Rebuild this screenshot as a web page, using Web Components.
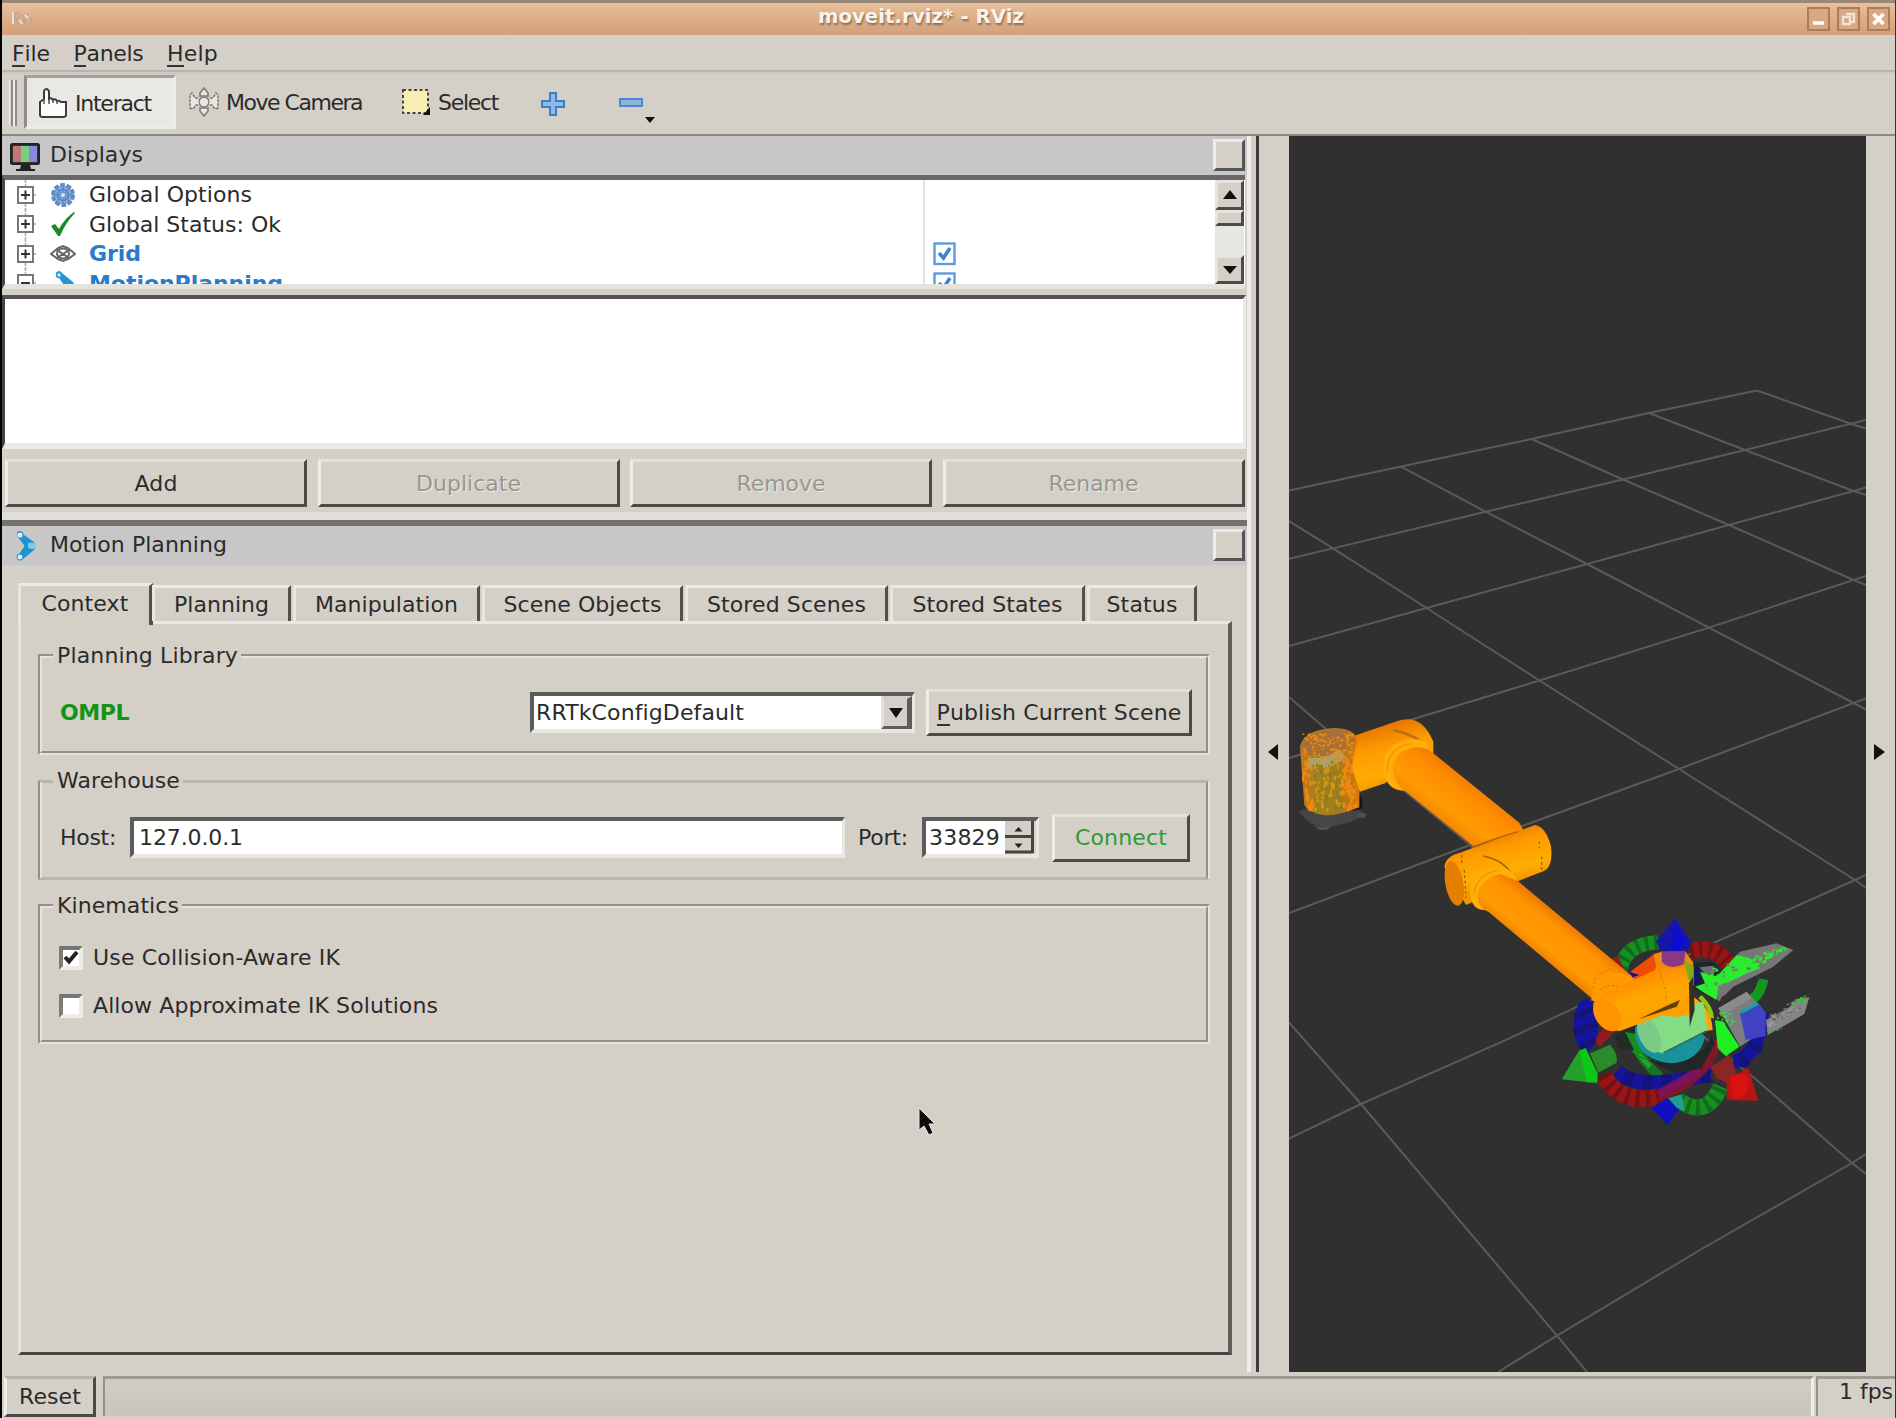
<!DOCTYPE html>
<html lang="en">
<head>
<meta charset="utf-8">
<title>moveit.rviz* - RViz</title>
<style>
html,body{margin:0;padding:0}
body{width:1896px;height:1418px;overflow:hidden;background:#d4d0c8;color:#2b2b2b;font:22px/26px "DejaVu Sans",sans-serif}
</style>
</head>
<body>
<rviz-window></rviz-window>
<script>
const pendingFit = [];
function define(name, markup, setup) {
  const tpl = document.createElement('template');
  tpl.innerHTML = markup;
  customElements.define(name, class extends HTMLElement {
    constructor() {
      super();
      this.attachShadow({ mode: 'open' }).appendChild(tpl.content.cloneNode(true));
    }
    connectedCallback() { if (setup) setup(this, this.shadowRoot); }
  });
}

/* A label whose tracking is adjusted to a given pixel width. */
define('ui-text', `<style>
:host{display:inline-block;white-space:pre;line-height:26px;flex:none}
:host([bold]){font-weight:bold}
::slotted(u){text-decoration:none;border-bottom:2px solid #333;display:inline-block;line-height:23px}
</style><slot></slot>`, el => { if (!el.fitted) { el.fitted = true; pendingFit.push(el); } });

define('push-button', `<style>
:host{display:flex;align-items:center;justify-content:center;box-sizing:border-box;height:48px;border:3px solid;border-color:#e3e1da #4a4a48 #4a4a48 #eeede8;background:#d4d0c8;flex:none}
:host([disabled]){color:#98968f;text-shadow:1px 1px 0 #eeece6}
:host([kind=float]){width:32px;height:32px;border-color:#eceae6 #555 #555 #eeede8;margin-top:-2px}
</style><slot></slot>`);

define('title-bar', `<style>
:host{display:flex;align-items:center;height:35px;box-sizing:border-box;border-top:3px solid #998877;background:linear-gradient(#e9bf9c,#dcae88 50%,#d3a079);color:#faf3ec;flex:none;padding-right:5px}
.logo{width:26px;margin-left:7px;margin-top:-3px}
.t{flex:1;display:flex;justify-content:center;margin-top:-4px;font-size:19.5px;text-shadow:1px 2px 2px #8a6a50}
.b{display:flex;gap:7px}
svg{display:block}
</style>
<svg class="logo" width="26" height="18" viewBox="0 0 26 18"><g fill="none" stroke="#c2a692" stroke-width="2"><path d="M5 16V4h4q3 2 0 5H6l5 6"/><path d="M13 5l3 9 3-9M22 8v7"/></g><path d="M4 3v12M10 11l3 4M16 6l3 3" stroke="#f2ded0" stroke-width="2"/></svg>
<div class="t"><ui-text bold w="206">moveit.rviz* - RViz</ui-text></div>
<div class="b">
<svg width="23" height="24"><rect x="1" y="1" width="21" height="22" fill="#d9a881" stroke="#ab7c59" stroke-width="2"/><path d="M6 16h11" stroke="#fff" stroke-width="3.5"/></svg>
<svg width="23" height="24"><rect x="1" y="1" width="21" height="22" fill="#d9a881" stroke="#ab7c59" stroke-width="2"/><path d="M9 7h8v8h-3M6 10h7v7H6z" fill="none" stroke="#f3e2d4" stroke-width="2.4"/></svg>
<svg width="23" height="24"><rect x="1" y="1" width="21" height="22" fill="#d9a881" stroke="#ab7c59" stroke-width="2"/><path d="M6.500 7l10 10M16.500 7l-10 10" stroke="#fff" stroke-width="3.8"/></svg>
</div>`);

define('menu-bar', `<style>
:host{display:flex;height:37px;box-sizing:border-box;padding:6px 0 0 10px;border-bottom:2px solid #b6b4ad;box-shadow:0 2px 0 #cbc9c5;flex:none;position:relative}
ui-text+ui-text{margin-left:23.500px}
</style><ui-text w="38"><u>F</u>ile</ui-text><ui-text w="70"><u>P</u>anels</ui-text><ui-text w="51"><u>H</u>elp</ui-text>`);

define('tool-bar', `<style>
:host{display:flex;height:62px;box-sizing:border-box;padding-top:3px;flex:none}
.grip{width:7px;height:46px;margin:5px 5px 0 7px;flex:none;border-left:1px solid #f0efea;background:linear-gradient(90deg,#d4d0c8 1px,#8c8b86 1px 3px,#eee 3px 5px,#8c8b86 5px)}
.on{width:152px;height:54px;box-sizing:border-box;border:3px solid;border-color:#a3a19b #eeece7 #eeece7 #8f8d88;background:#e9e8e4;display:flex;align-items:center;padding:2px 0 0 11px;margin-left:2px}
.it{display:flex;align-items:center;height:54px}
svg{display:block;flex:none}
</style>
<div class="grip"></div>
<div class="on"><svg width="30" height="32" viewBox="0 0 30 32"><path d="M2 28V15l4-3V4q2-4 5 0v8q2-2 4 1 2-2 4 1 2-1 4 1h5v13q0 2-3 2H5q-3 0-3-2z" fill="#fcfcfa" stroke="#3c3c3c" stroke-width="2"/><path d="M6 12v5M11 12v5M15 13v3M19 14v3" stroke="#555" stroke-width="1.500"/></svg><ui-text w="76" style="margin:2px 0 0 7px">Interact</ui-text></div>
<div class="it" style="margin-left:13px"><svg width="30" height="30" viewBox="0 0 30 30" fill="#e9e7e2" stroke="#7e7c78" stroke-width="1.600"><circle cx="15" cy="15" r="5"/><path d="M11 9V6l4-5 4 5v3zM11 21v3l4 5 4-5v-3z"/><path d="M9 11H6L3 6 1 8v13l3 1 3-4h3M21 11h3l3-5 2 2v13l-3 1-3-4h-3" stroke-dasharray="3 1"/></svg><ui-text w="136" style="margin:1px 0 0 7px">Move Camera</ui-text></div>
<div class="it" style="margin-left:39px"><svg width="30" height="28" viewBox="0 0 30 28"><rect x="2" y="2" width="25" height="23" fill="#f8eeb4" stroke="#444" stroke-width="2" stroke-dasharray="3 2.500"/><path d="M29 19v8h-7z" fill="#111"/></svg><ui-text w="60" style="margin:1px 0 0 7px">Select</ui-text></div>
<div class="it" style="margin:2px 0 0 43px"><svg width="24" height="26" viewBox="0 0 24 26"><path d="M9 2h6v8h8v6h-8v8H9v-8H1v-6h8z" fill="#8fb9e8" stroke="#3f7fc6" stroke-width="2"/></svg></div>
<div class="it" style="margin:2px 0 0 54px"><svg width="38" height="40" viewBox="0 0 38 40"><rect x="1" y="15" width="22" height="7" fill="#8fb5df" stroke="#4c89cc" stroke-width="2"/><path d="M26 33h10l-5 6z" fill="#111"/></svg></div>`);

define('dock-header', `<style>
:host{display:flex;align-items:center;height:39px;background:#c7c7c7;flex:none;box-sizing:border-box;padding:0 2px 0 6px}
.f{flex:1}
slot{display:block}
</style><slot></slot><div class="f"></div><push-button kind="float"></push-button>`);

define('tree-row', `<style>
:host{display:flex;height:29.5px;align-items:center;flex:none}
.x,.i,svg{display:block;flex:none}
.n{width:851px;padding:1px 0 0 13px;box-sizing:border-box}
</style>
<svg class="x" width="32" height="30" viewBox="0 0 32 30"><path d="M20.500 0v30M28 15h4" stroke="#aaa" stroke-width="1.500" stroke-dasharray="3 1"/><rect x="13" y="7" width="15" height="16" fill="#fff" stroke="#777" stroke-width="2"/><path d="M16 15h9" stroke="#333" stroke-width="2"/><path class="v" d="M20.500 10.500v9" stroke="#333" stroke-width="2"/></svg>
<slot name="icon"></slot><div class="n"><slot></slot></div><slot name="value"></slot>`, (el, r) => {
  if (el.hasAttribute('open')) r.querySelector('.v').remove();
});

define('blue-check', `<style>:host{display:block;margin-left:6px;margin-top:1px}svg{display:block}</style>
<svg width="24" height="24" viewBox="0 0 24 24"><rect x="1.500" y="1.500" width="20" height="20.500" fill="#fff" stroke="#5c9cdb" stroke-width="2.400"/><path d="M6 11l4.500 5L17 6" fill="none" stroke="#3d86cf" stroke-width="3.600"/></svg>`);

define('display-tree', `<style>
:host{display:flex;height:114px;box-sizing:border-box;border-top:5px solid #686866;border-left:3px solid #4a4a4a;border-bottom:5px solid #e5e4dc;background:#fff;width:1243px;flex:none;overflow:hidden}
.rows{flex:1;overflow:hidden;background:linear-gradient(90deg,#fff 918px,#e2e2e2 918px 920px,#fff 920px)}
.rows svg{display:block;margin-left:13px}
.blue{color:#2b7bcd}
.bar{width:29px;background:#e8e6e2;display:flex;flex-direction:column;flex:none;margin-right:1px}
.sb{box-sizing:border-box;background:#d4d0c8;border:3px solid;border-color:#e6e4de #4a4a48 #4a4a48 #e6e4de;display:flex;align-items:center;justify-content:center}
.bar svg{display:block;margin:0}
</style>
<div class="rows">
<tree-row><svg slot="icon" width="26" height="26" viewBox="-13 -13 26 26"><circle r="10" fill="#8fb0db" stroke="#5d8cc9" stroke-width="4" stroke-dasharray="4.500 1.800"/><path d="M-8-8L8 8M8-8L-8 8M0-11V11M-11 0H11" stroke="#5f8dc8" stroke-width="1.500"/><circle r="5.500" fill="none" stroke="#5a88c6" stroke-width="2"/><circle r="2" fill="#d9e6f5"/></svg><ui-text w="163">Global Options</ui-text></tree-row>
<tree-row><svg slot="icon" width="26" height="26" viewBox="0 0 26 26"><path d="M1 15l4-2 4 5Q15 7 24 1l1 1Q16 11 10 25H8z" fill="#1f8a25"/></svg><ui-text w="192">Global Status: Ok</ui-text></tree-row>
<tree-row><svg slot="icon" width="26" height="26" viewBox="0 0 26 26"><g fill="none" stroke="#666" stroke-width="2"><path d="M1 13l7-6 5-2 5 2 7 6-7 5-5 2-5-2zM7 9l12 8M19 9L7 17"/><ellipse cx="13" cy="12.500" rx="6" ry="5"/></g></svg><ui-text bold class="blue" w="52">Grid</ui-text><blue-check slot="value"></blue-check></tree-row>
<tree-row open><svg slot="icon" width="26" height="26" viewBox="0 0 26 26"><path d="M6 3q3-4 6 0l11 9q3 4 1 9l-7-1z" fill="#2796d0"/><circle cx="9" cy="5" r="2.500" fill="#c9eaf8" stroke="#2796d0" stroke-width="1.500"/></svg><ui-text bold class="blue" w="194">MotionPlanning</ui-text><blue-check slot="value"></blue-check></tree-row>
</div>
<div class="bar">
<div class="sb" style="height:30px"><svg width="16" height="10"><path d="M1 9L8 0l7 9z" fill="#111"/></svg></div>
<div class="sb" style="height:16px"></div>
<div style="flex:1"></div>
<div class="sb" style="height:29px"><svg width="16" height="10"><path d="M1 1l7 8 7-8z" fill="#111"/></svg></div>
</div>`);

define('tab-item', `<style>
:host{display:flex;align-items:center;justify-content:center;box-sizing:border-box;height:36px;border:3px solid;border-color:#ebeae5 #4f4f4c transparent #e8e6e1;border-bottom:0;margin-right:2px;flex:none;padding-top:1px;position:relative;left:-1px}
:host([selected]){height:42px;margin-right:0;margin-bottom:-4px;background:#d4d0c8;left:0;border-right-width:4px;padding-top:0}
:host([selected]) slot{display:block;margin-top:-3px}
</style><slot></slot>`);

define('group-box', `<style>
:host{display:block;flex:none}
fieldset{margin:0;padding:0;border:4px groove #e6e3dc;box-sizing:border-box;width:1172px;height:100%;min-width:0}
:host([flat]) fieldset{border-top:3px solid #b8b6b1;border-bottom:3px solid #b8b6b1}
legend{padding:0 3px 0 4px;margin-left:11px;line-height:26px;height:26px}
div{display:flex;flex-direction:column}
</style><fieldset><legend><slot name="title"></slot></legend><div><slot></slot></div></fieldset>`);

define('sunken-field', `<style>
:host{display:flex;box-sizing:border-box;height:41px;border:4px solid;border-color:#5c5c5a #e9e7e1 #e9e7e1 #5c5c5a;border-right-width:3px;background:#fff;align-items:center;flex:none;justify-content:space-between}
</style><slot></slot>`);

define('check-box', `<style>
:host{display:flex;align-items:center;gap:10px;height:26px;flex:none}
i{box-sizing:border-box;width:24px;height:24px;border:4px solid;border-color:#777573 #eeece7 #eeece7 #7d7b77;background:#fff;display:block}
svg{display:none}
:host([checked]) svg{display:block}
</style><i><svg width="16" height="16" viewBox="0 0 16 16"><path d="M2 7l4 4.500L14 2" fill="none" stroke="#222" stroke-width="4"/></svg></i><slot></slot>`);

define('context-panel', `<style>
:host{display:flex;flex-direction:column;margin-left:16px;width:1214px;flex:none}
.tabs{display:flex;align-items:flex-end;height:38px}
.pane{box-sizing:border-box;height:734px;border:3px solid;border-color:#e8e7e2 #5e5e5b #434743 #e4e2dc;border-right-width:4px;padding:19px 0 0 17px;display:flex;flex-direction:column}
.row{display:flex;align-items:center;height:82px;padding:5px 14px 0 18px;box-sizing:border-box}
.drop{box-sizing:border-box;width:31px;height:33px;background:#d4d0c8;border:3px solid;border-color:#d4d0c8 #5c5c5a #5c5c5a #e4e1da;border-right-width:5px;display:flex;align-items:center;justify-content:center}
.spin{width:31px;height:33px;flex:none}
</style>
<div class="tabs">
<tab-item selected style="width:135px"><ui-text w="87">Context</ui-text></tab-item>
<tab-item style="width:139px"><ui-text w="95">Planning</ui-text></tab-item>
<tab-item style="width:187px"><ui-text w="143">Manipulation</ui-text></tab-item>
<tab-item style="width:201px"><ui-text w="158">Scene Objects</ui-text></tab-item>
<tab-item style="width:203px"><ui-text w="159">Stored Scenes</ui-text></tab-item>
<tab-item style="width:195px"><ui-text w="150">Stored States</ui-text></tab-item>
<tab-item style="width:110px"><ui-text w="71">Status</ui-text></tab-item>
</div>
<div class="pane">
<group-box style="height:112px"><ui-text slot="title" w="181">Planning Library</ui-text>
<div class="row"><ui-text bold w="69" style="color:#149319">OMPL</ui-text><sunken-field style="width:385px;margin-left:auto"><ui-text w="208" style="margin-left:2px">RRTkConfigDefault</ui-text><div class="drop"><svg width="14" height="10"><path d="M0 0h14L7 10z" fill="#111"/></svg></div></sunken-field><push-button style="width:266px;margin-left:11px;height:47px"><ui-text w="245"><u>P</u>ublish Current Scene</ui-text></push-button></div></group-box>
<group-box flat style="height:112px;margin-top:13px"><ui-text slot="title" w="123">Warehouse</ui-text>
<div class="row"><ui-text w="56">Host:</ui-text><sunken-field style="width:715px;margin-left:14px"><ui-text w="104" style="margin-left:5px">127.0.0.1</ui-text></sunken-field><ui-text w="50" style="margin-left:13px">Port:</ui-text><sunken-field style="width:117px;margin-left:14px"><ui-text w="71" style="margin-left:3px">33829</ui-text><svg class="spin" width="31" height="33" viewBox="0 0 31 33"><path fill="#d4d0c8" d="M0 0h31v33H0z"/><path d="M0 15.500h28M0 31h28M27.500 0v32" stroke="#454543" stroke-width="3"/><path d="M9.500 10.500h8l-4-4.500zM9.500 22.500h8l-4 4.500z" fill="#222"/></svg></sunken-field><push-button style="width:138px;margin-left:13px"><ui-text w="92" style="color:#2f9a38">Connect</ui-text></push-button></div></group-box>
<group-box style="height:151px;margin-top:13px"><ui-text slot="title" w="122">Kinematics</ui-text>
<check-box checked style="margin:26px 0 0 17px"><ui-text w="247">Use Collision-Aware IK</ui-text></check-box>
<check-box style="margin:22px 0 0 17px"><ui-text w="345">Allow Approximate IK Solutions</ui-text></check-box></group-box>
</div>`);

define('left-dock', `<style>
:host{display:flex;flex-direction:column;width:1245px;flex:none}
.editor{height:154px;box-sizing:border-box;margin-top:6px;background:#fff;border:3px solid;border-color:#535351 #ebeae5 #ebeae8 #444;border-top-width:4px;border-bottom-width:6px;width:1244px;flex:none}
.btns{display:flex;gap:10.500px;margin:10px 0 0 3px}
.btns push-button{width:302px;padding-top:1px}
.split{height:8px;background:#e1ddd7;margin-top:5px;flex:none}
.line{height:6px;background:#72716c;flex:none}
svg{display:block}
.lab{display:flex;align-items:center}
</style>
<dock-header><div class="lab"><svg width="32" height="40" viewBox="0 0 32 40"><rect x="3" y="8" width="28" height="20" rx="1.500" fill="#333" stroke="#222" stroke-width="2"/><path fill="#c47676" d="M5 10h8v16H5z"/><path fill="#78cf80" d="M13 10h8v16h-8z"/><path fill="#8d86dd" d="M21 10h8v16h-8z"/><path d="M13 29h9l1 4h4v2H8v-2h4z" fill="#222"/></svg><ui-text w="93" style="margin:-1px 0 0 10px">Displays</ui-text></div></dock-header>
<display-tree></display-tree>
<div class="editor"></div>
<div class="btns"><push-button><ui-text w="43">Add</ui-text></push-button><push-button disabled><ui-text w="105">Duplicate</ui-text></push-button><push-button disabled><ui-text w="89">Remove</ui-text></push-button><push-button disabled><ui-text w="90">Rename</ui-text></push-button></div>
<div class="split"></div><div class="line"></div>
<dock-header><div class="lab"><svg width="32" height="34" viewBox="0 0 32 34"><path d="M9 3q5-3 7 3l10 7q3 4 0 8l-11 9q-5 4-6-2l7-10v-2L9 7z" fill="#1f92cf"/><path d="M20 14q8-2 8 3-1 5-8 2" fill="#7fc8ea"/><circle cx="12" cy="6" r="2.600" fill="#d7eefa"/><circle cx="12" cy="28" r="3" fill="#d7eefa" stroke="#1f92cf"/></svg><ui-text w="177" style="margin:-1px 0 0 10px">Motion Planning</ui-text></div></dock-header>
<context-panel style="margin-top:18px"></context-panel>`);

define('scene-view', `<style>:host{display:block;width:577px;height:1236px;flex:none;background:#303030}svg{display:block}</style>
<svg width="577" height="1236" viewBox="1289 136 577 1236">
<defs>
<linearGradient id="a1" gradientUnits="userSpaceOnUse" x1="610" y1="300" x2="520" y2="420"><stop offset="0" stop-color="#ee7a00"/><stop offset=".3" stop-color="#ff8c00"/><stop offset=".75" stop-color="#ff9c00"/><stop offset="1" stop-color="#f58a00"/></linearGradient>
<linearGradient id="a2" gradientUnits="userSpaceOnUse" x1="880" y1="720" x2="800" y2="820"><stop offset="0" stop-color="#f07c00"/><stop offset=".25" stop-color="#ff9400"/><stop offset=".75" stop-color="#ff9a00"/><stop offset="1" stop-color="#ef8200"/></linearGradient>
<linearGradient id="el" gradientUnits="userSpaceOnUse" x1="680" y1="465" x2="720" y2="610"><stop offset="0" stop-color="#f08500"/><stop offset=".3" stop-color="#ff9d00"/><stop offset=".75" stop-color="#ffae00"/><stop offset="1" stop-color="#f39400"/></linearGradient>
<linearGradient id="sh" gradientUnits="userSpaceOnUse" x1="300" y1="150" x2="340" y2="320"><stop offset="0" stop-color="#e97a00"/><stop offset=".35" stop-color="#ff9b00"/><stop offset=".8" stop-color="#ffac00"/><stop offset="1" stop-color="#f29a00"/></linearGradient>
<linearGradient id="bs" x1="0" x2="1"><stop offset="0" stop-color="#c8761c"/><stop offset=".3" stop-color="#a5801c"/><stop offset=".65" stop-color="#a07c1c"/><stop offset="1" stop-color="#d9780e"/></linearGradient>
<linearGradient id="wr" gradientUnits="userSpaceOnUse" x1="400" y1="290" x2="440" y2="420"><stop offset="0" stop-color="#ff8a00"/><stop offset=".5" stop-color="#ffa800"/><stop offset="1" stop-color="#ffa000"/></linearGradient>
</defs>
<g fill="none" stroke="#5a5a5a" stroke-width="2">
<path d="M1289 490.500L1401 466.600 1531.500 439 1649 413 1757 390.500 1853.600 424.800 1866 428.600"/>
<path d="M1289 558.700L1333 548.400 1485.600 511.700 1623 479.500 1745 450 1866 420"/>
<path d="M1289 646L1426.500 608 1587 564 1729 525 1853.600 491 1866 487.500"/>
<path d="M1289 758L1416.700 718 1539.500 680.500 1709 627.600 1853.600 580 1866 576"/>
<path d="M1289 913L1470 845 1679 769 1853.600 703 1866 698.500"/>
<path d="M1289 1138.500L1361 1104 1500 1042.700 1716.700 941.700 1855 880 1866 875"/>
<path d="M1498 1372L1557 1335.600 1700 1250 1852 1163 1866 1154"/>
<path d="M1649 413L1745 450 1853.600 491 1866 495M1531.500 439L1623 479.500 1729 525 1853.600 580 1866 585"/>
<path d="M1401 466.600L1485.600 511.700 1587 564 1709 627.600 1853.600 703 1866 709.600"/>
<path d="M1289 521L1333 548.400 1426.500 608 1539.500 680.500 1679 769 1855 880 1866 888"/>
<path d="M1289 697L1326 729 1407 793 1470 845 1756.700 1080 1852 1163 1866 1174M1289 1022.500L1361 1104 1557 1335.600 1587 1372"/>
</g>
<g transform="translate(1270 680) scale(.33333)">
<path d="M85 395l40-15 130 5 35 20-60 25-65 12-45-12z" fill="#464646"/><path d="M130 435q30 10 60 0l-20 15h-20zM265 400l25 3-8 12-18-5z" fill="#505050"/><path d="M245 340l30 10 3 35-30 8z" fill="#151515"/>
<path d="M250 168L385 122Q455 100 490 185V220L440 225 345 310 270 335 235 280z" fill="url(#sh)"/>
<path d="M370 150q70 15 105 55" stroke="#c06e10" stroke-width="7" fill="none"/>
<path d="M90 200Q100 150 190 144 262 145 260 185L245 262 268 330V382Q200 410 160 405 115 398 103 375z" fill="url(#bs)"/>
<ellipse cx="173" cy="188" rx="82" ry="37" fill="#a67038" transform="rotate(-9 173 188)"/>
<path d="M112 248q60 10 105-28" fill="none" stroke="#aea06a" stroke-width="32"/>
<g id="speck"></g>
<path d="M340 270Q335 190 425 177 475 175 485 215L430 330Q350 345 340 270z" fill="#ffad08"/>
<path d="M352 275q0-75 75-85" fill="none" stroke="#f29300" stroke-width="4"/>
<path d="M368 262Q380 205 445 201L475 208 748 428 760 450 612 500 408 335Q370 310 368 262z" fill="url(#a1)"/>
<path d="M523 560Q528 528 570 518L795 435Q828 440 843 500 850 560 822 573L738 606 588 675z" fill="url(#el)"/>
<path d="M605 502Q690 470 745 455" fill="none" stroke="#ae650c" stroke-width="4"/>
<path d="M640 528q70 15 90 65" fill="none" stroke="#9d620e" stroke-width="5"/>
<ellipse cx="553" cy="610" rx="27" ry="68" fill="#e67f00" transform="rotate(-10 553 610)"/>
<path d="M575 525v30M583 570l5 85M808 485v20M815 530v45" stroke="#8a6a1c" stroke-width="4" stroke-dasharray="8 8"/>
<path d="M600 640Q600 575 680 558 730 565 740 600L660 688Q605 700 600 640z" fill="#ffae08"/>
<path d="M612 640q8-55 68-68" stroke="#ef9300" stroke-width="4" fill="none"/>
<g transform="translate(690 600)" fill="none">
<path d="M362 268Q376 190 475 187" stroke="#169022" stroke-width="43"/><path d="M362 268Q376 190 475 187" stroke="#116b1c" stroke-width="43" stroke-dasharray="11 17"/>
<path d="M535 660Q620 720 662 620" stroke="#169022" stroke-width="48"/><path d="M535 660Q620 720 662 620" stroke="#116b1c" stroke-width="48" stroke-dasharray="12 17"/>
<path d="M570 215Q645 190 690 255" stroke="#961616" stroke-width="48"/><path d="M570 215Q645 190 690 255" stroke="#711212" stroke-width="48" stroke-dasharray="10 18"/>
<path d="M752 360q28-12 38-62" stroke="#129a1e" stroke-width="30"/>
<path d="M385 450Q410 530 480 590" stroke="#16751f" stroke-width="28"/><path d="M395 500l55 60" stroke="#21a52c" stroke-width="14"/>
<path d="M350 575Q410 625 540 600T650 590" stroke="#13137e" stroke-width="44"/><path d="M350 575Q410 625 540 600T650 590" stroke="#15159c" stroke-width="44" stroke-dasharray="26 32"/>
<path d="M645 480Q630 590 470 650" stroke="#8b1426" stroke-width="36" opacity=".9"/><path d="M600 570l-120 70" stroke="#7b1270" stroke-width="26" opacity=".7"/>
<path d="M310 585Q360 675 475 650" stroke="#961616" stroke-width="50"/><path d="M310 585Q360 675 475 650" stroke="#711212" stroke-width="50" stroke-dasharray="12 19"/>
<path d="M290 490L335 440M340 235l20 40" stroke="#921b1b" stroke-width="30"/>
<ellipse cx="258" cy="435" rx="37" ry="79" fill="#1414a0"/><path d="M224 410l60-25M222 458l68-28M240 503l45-25" stroke="#151570" stroke-width="17"/>
<path d="M700 545Q775 535 785 400" stroke="#14149a" stroke-width="42"/><path d="M720 545Q775 525 785 430" stroke="#13137c" stroke-width="42" stroke-dasharray="22 34"/>
<path d="M185 598L237 512 292 578V610z" fill="#25a02a"/><path d="M237 512l20-8 35 74v26l-30 4z" fill="#0ac914"/><path d="M270 520L330 494Q355 520 350 548L295 578z" fill="#298b29"/>
<path d="M630 560l60-35 20 55-20 35-40-20z" fill="#8c2626"/><path d="M680 600L745 563 775 662 680 660z" fill="#b91414"/><path d="M690 590q60-25 55 25 0 40-45 40z" fill="#dc1212"/>
<path d="M455 684L500 655 542 682 503 736z" fill="#1010bd"/><path d="M505 655l40-12 10 50-25-10z" fill="#229b90"/>
<path d="M385 280l80-60 30-5 5 60-90 35z" fill="#f04a06"/><path d="M388 275l30 10-35 12z" fill="#14147a"/>
<path d="M570 250l65-5 25 25-50 70-40-20z" fill="#1d2430"/><path d="M588 262v50" stroke="#121866" stroke-width="20"/>
<path d="M555 340Q635 370 638 450L600 455z" fill="#ffa70a"/><path d="M600 350q35 35 35 65" stroke="#9ac414" stroke-width="14"/>
<path d="M345 465l60-30 35 60-15 20-70-10z" fill="#222b26"/><path d="M400 520q90 60 210-10l25-40 10 20-40 75-80 15z" fill="#202726"/>
<path d="M375 455l50 10 20 50-35 10z" fill="#178c22"/>
<path d="M405 440Q400 535 510 550 600 545 615 470L570 430z" fill="#17939c"/>
<path d="M415 425L480 400 610 365 622 450 490 521Q425 500 415 425z" fill="#84dd84"/><ellipse cx="447" cy="465" rx="30" ry="57" transform="rotate(-25 447 465)" fill="#7cca87"/>
<path d="M490 519L620 453" stroke="#326b59" stroke-width="5"/>
</g>
<path d="M622 650Q630 595 690 582L742 602 1085 887 1110 980 1000 980 965 955 655 695Q625 685 622 650z" fill="url(#a2)"/>
<g transform="translate(690 600)">
<path d="M275 360Q270 300 320 285 360 270 400 295L420 340 350 400z" fill="#ff9a00"/>
<path d="M300 330q25-20 60-10M280 325q0-45 55-60" stroke="#c5790a" stroke-width="3" fill="none" stroke-dasharray="7 6"/>
<path d="M300 345L400 300 465 270 470 250 555 258 578 310 580 400Q530 418 490 405L360 453Q280 450 280 370z" fill="url(#wr)"/>
<path d="M460 225l30-12h65l25 35v65l-25-50H470z" fill="#ee8a0b"/>
<path d="M553 240l28 20v60l-18-25z" fill="#7eae10"/>
<ellipse cx="322" cy="405" rx="36" ry="54" transform="rotate(-35 322 405)" fill="#ff9400"/>
<path d="M415 418l115-38 10-20-35 15z" fill="#61410a"/>
<path d="M567 310l12-20 5 100-15 50z" fill="#34321c"/>
<path d="M495 320l5 40M478 270l12 40" stroke="#bf7c08" stroke-width="3" stroke-dasharray="8 5"/>
<path d="M525 113L468 185 488 215H560L577 188z" fill="#1616a8"/><path d="M525 130l-15 70 20 20 30-35z" fill="#0d0dd0"/><path d="M485 215l72-3-5 40q-40 20-66-5z" fill="#8b3785"/>
<path d="M720 215l110-25 50 20-60 50-120 60-45 45-15-60z" fill="#777"/><path d="M665 350l115-55-10 15-110 55z" fill="#333"/>
<path d="M598 262l40-5 20 15-40 12z" fill="#6e716e"/>
<path d="M600 275l50 15 60-65 40 10 30 30-40 15-50 25-35 10-5 45-35-20-30-20 30-10z" fill="#2bed2f"/>
<path d="M655 385l85-50 45 50 10 65-75 50-45-80z" fill="#7d7d80"/><path d="M655 385l85-50 15 20-85 50z" fill="#8b8b8b"/>
<path d="M720 400l55-32 22 30v70l-60 12z" fill="#4141c4"/><path d="M722 398l52-28" stroke="#16a1ae" stroke-width="9"/>
<path d="M645 420l25 5 48 75-40 28-25-25z" fill="#20ef24"/>
<path d="M798 420l70-38 20-25 40-5-15 50-60 35-50 28z" fill="#858585"/><path d="M800 455l45-8M860 375l60-28" stroke="#35b736" stroke-width="4" stroke-dasharray="9 5"/>
<g id="gspeck"></g>
</g></g>
</svg>`, (el, root) => {
  const NS = 'http://www.w3.org/2000/svg';
  let seed = 7;
  const rnd = () => (seed = (seed * 16807) % 2147483647) / 2147483647;
  const dot = (g, x, y, w, h, c) => {
    const r = document.createElementNS(NS, 'rect');
    r.setAttribute('x', x); r.setAttribute('y', y);
    r.setAttribute('width', w); r.setAttribute('height', h); r.setAttribute('fill', c);
    g.appendChild(r);
  };
  const base = root.getElementById('speck');
  for (let i = 0; i < 330; i++) {
    const y = 160 + rnd() * 225, mid = y > 235;
    const left = 96 + (y > 300 ? 8 : 0), x = left + rnd() * 150;
    const edge = Math.abs(x - 172) > 45;
    if (mid && !edge && rnd() < .35) continue;
    dot(base, x, y, 4 + rnd() * 5, mid ? 6 + rnd() * 12 : 3 + rnd() * 5, edge || !mid ? '#f08a10' : (rnd() < .5 ? '#d29a10' : '#8f7a28'));
  }
  const grip = root.getElementById('gspeck');
  for (let i = 0; i < 110; i++) {
    const t = rnd();
    dot(grip, 610 + t * 245, 300 - t * 100 + (rnd() - .5) * 50 * (1.2 - t), 4 + rnd() * 9, 4 + rnd() * 6, rnd() < .68 ? '#27ee2b' : '#777');
  }
  for (let i = 0; i < 35; i++) {
    const t = rnd();
    dot(grip, 800 + t * 110, 425 - t * 65 + (rnd() - .5) * 34, 4 + rnd() * 6, 4 + rnd() * 5, rnd() < .25 ? '#2dcb31' : (rnd() < .5 ? '#999' : '#6b6b6b'));
  }
  for (let i = 0; i < 25; i++) dot(grip, 650 + rnd() * 50, 395 + rnd() * 40, 5, 5, '#27ee2b');
});

define('status-bar', `<style>
:host{display:flex;height:42px;box-sizing:border-box;flex:none}
.frame{box-sizing:border-box;height:40px;border-top:3px solid #9c9a92;border-left:2px solid #94928b;background:linear-gradient(#d0cdc5,#c9c5be)}
push-button{height:41px;width:92px;margin-left:2px;border-top-color:#b5b3ac}
</style><push-button><ui-text w="62">Reset</ui-text></push-button><div class="frame" style="width:1711px;margin-left:7px;border-right:3px solid #efeee9"></div>
<div class="frame" style="flex:1;margin-left:2px;background:none;padding-left:21px;overflow:hidden"><ui-text w="54">1 fps</ui-text></div>`);

define('rviz-window', `<style>
:host{display:flex;flex-direction:column;width:1896px;height:1418px;box-sizing:border-box;border-left:2px solid #000;border-right:1px solid #333;position:relative;overflow:hidden}
.mid{display:flex;height:1242px;box-sizing:border-box;border-top:2px solid #8a8984;flex:none}
.sep{width:12px;height:1236px;box-sizing:border-box;border-right:3px solid #3b3c3b;background:linear-gradient(90deg,#efeeea 4px,#d4d0c8 4px);flex:none}
.col{display:flex;align-items:center;flex:none;height:1231px}
.cursor{position:absolute;left:916px;top:1107px}
svg{display:block}
</style>
<title-bar></title-bar><menu-bar></menu-bar><tool-bar></tool-bar>
<div class="mid"><left-dock></left-dock><div class="sep"></div>
<div class="col" style="width:30px"><svg width="30" height="20"><path d="M19 2v16L9 10z" fill="#111"/></svg></div>
<scene-view></scene-view>
<div class="col" style="width:28px"><svg width="28" height="20"><path d="M8 2v16l11-8z" fill="#111"/></svg></div>
</div>
<status-bar></status-bar>
<svg class="cursor" width="20" height="30" viewBox="0 0 20 30"><path d="M1 1v22l5-4 5 9 4-2-4-9h6z" fill="#0a0a0a" stroke="#e8e6e0" stroke-width="1"/></svg>`);

for (const el of pendingFit) {
  const target = +el.getAttribute('w');
  if (!target) continue;
  const n = el.textContent.length;
  el.style.letterSpacing = ((target - el.getBoundingClientRect().width) / n).toFixed(3) + 'px';
}
</script>
</body>
</html>
